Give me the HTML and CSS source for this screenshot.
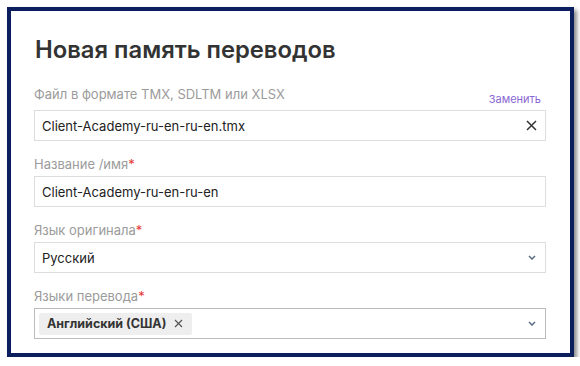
FILE: index.html
```html
<!DOCTYPE html>
<html lang="ru">
<head>
  <meta charset="UTF-8">
  <title>Новая память переводов</title>
  <link rel="stylesheet" href="styles.css">
</head>
<body>
  <div class="dialog">
    <h1>Новая память переводов</h1>

    <!-- File -->
    <div class="field">
      <div class="label-row">
        <span class="label">Файл в формате TMX, SDLTM или XLSX</span>
        <a class="replace" href="#">Заменить</a>
      </div>
      <div class="input">
        <span class="value">Client-Academy-ru-en-ru-en.tmx</span>
        <svg class="clear" width="11" height="11" viewBox="0 0 11 11">
          <path d="M1 1L10 10M10 1L1 10" stroke="#333" stroke-width="1.5" fill="none"/>
        </svg>
      </div>
    </div>

    <!-- Name -->
    <div class="field">
      <div class="label">Название /имя<span class="req">*</span></div>
      <div class="input">
        <span class="value">Client-Academy-ru-en-ru-en</span>
      </div>
    </div>

    <!-- Source language -->
    <div class="field">
      <div class="label">Язык оригинала<span class="req">*</span></div>
      <div class="input">
        <span class="value">Русский</span>
        <svg class="chevron" width="8" height="5" viewBox="0 0 8 5">
          <path d="M1 1L4 4L7 1" stroke="#5b6b88" stroke-width="1.5" fill="none"/>
        </svg>
      </div>
    </div>

    <!-- Target languages -->
    <div class="field">
      <div class="label">Языки перевода<span class="req">*</span></div>
      <div class="input input-active">
        <span class="tag">Английский (США)
          <svg class="tag-x" width="9" height="9" viewBox="0 0 9 9">
            <path d="M1 1L8 8M8 1L1 8" stroke="#555" stroke-width="1.2" fill="none"/>
          </svg>
        </span>
        <svg class="chevron" width="8" height="5" viewBox="0 0 8 5">
          <path d="M1 1L4 4L7 1" stroke="#5b6b88" stroke-width="1.5" fill="none"/>
        </svg>
      </div>
    </div>
  </div>
</body>
</html>
```
FILE: styles.css
```css
/* Base */
body {
  margin: 0;
  padding: 0;
  background-color: #fff;
  font-family: Inter, "Noto Sans", sans-serif;
}

/* Dialog frame */
.dialog {
  box-sizing: border-box;
  width: 567px;
  height: 350px;
  margin: 7px 0 0 7px;
  padding: 25px 24px 0 23px;
  border: 4px solid #0b1f5e;
  box-shadow: 3px 3px 4px rgba(0, 0, 0, 0.45);
}

h1 {
  margin: 0 0 21px 1px;
  font-size: 23.8px;
  line-height: 28px;
  font-weight: 600;
  color: #333;
}

/* Fields */
.field {
  margin-bottom: 14px;
}

.label-row {
  display: flex;
  justify-content: space-between;
  align-items: flex-end;
  height: 22px;
  margin-bottom: 3px;
}

.label-row .label {
  align-self: flex-start;
  margin-bottom: 0;
}

.label {
  font-size: 13px;
  line-height: 18px;
  color: #9b9b9b;
  margin-bottom: 3px;
}

.req {
  color: #e53935;
}

.replace {
  font-size: 11px;
  line-height: 16px;
  color: #8a68d4;
  text-decoration: none;
  margin-right: 5px;
}

.input {
  box-sizing: border-box;
  display: flex;
  align-items: center;
  justify-content: space-between;
  height: 31px;
  padding: 0 8px 0 7px;
  border: 1px solid #ddd;
  font-size: 13px;
  color: #222;
}

.input-active {
  border-color: #bbb;
  padding-left: 4px;
}

.chevron {
  margin-right: 1px;
}

/* Selected language tag */
.tag {
  display: flex;
  align-items: center;
  height: 22px;
  padding: 0 9px 0 8px;
  background-color: #eee;
  border-radius: 2px;
  font-size: 12.5px;
  font-weight: 700;
  color: #333;
}

.tag-x {
  margin-left: 8px;
}
```
